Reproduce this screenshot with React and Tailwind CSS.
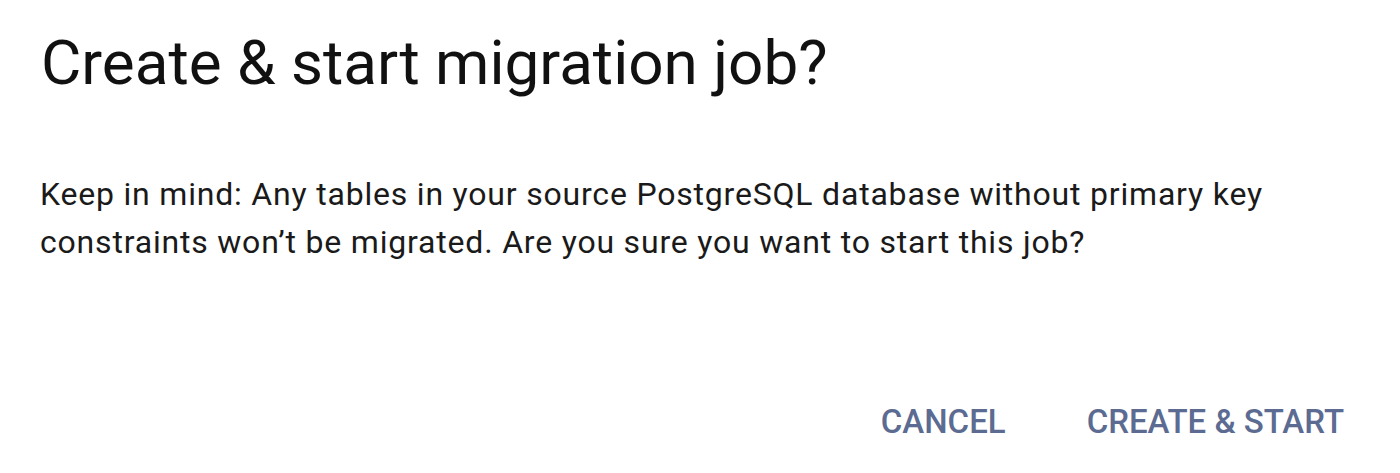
export default function App() {
  return (
    <div className="w-[1400px] h-[473px] bg-white flex flex-col font-['Roboto',sans-serif] overflow-hidden">
      <h1 className="pl-[41px] pt-[25px] text-[62px] leading-[76px] font-normal text-[#111]">
        Create &amp; start migration job?
      </h1>
      <p className="pl-[40px] pt-[69px] pr-[100px] text-[32px] leading-[48px] tracking-[0.8px] text-[#1a1a1a]">
        Keep in mind: Any tables in your source PostgreSQL database without primary key
        constraints won’t be migrated. Are you sure you want to start this job?
      </p>
      <div className="flex justify-end gap-[81px] pr-[56px] pt-[136px]">
        <button className="text-[33px] leading-[40px] font-medium text-[#5c6b91]">CANCEL</button>
        <button className="text-[33px] leading-[40px] font-medium text-[#5c6b91]">CREATE &amp; START</button>
      </div>
    </div>
  );
}
